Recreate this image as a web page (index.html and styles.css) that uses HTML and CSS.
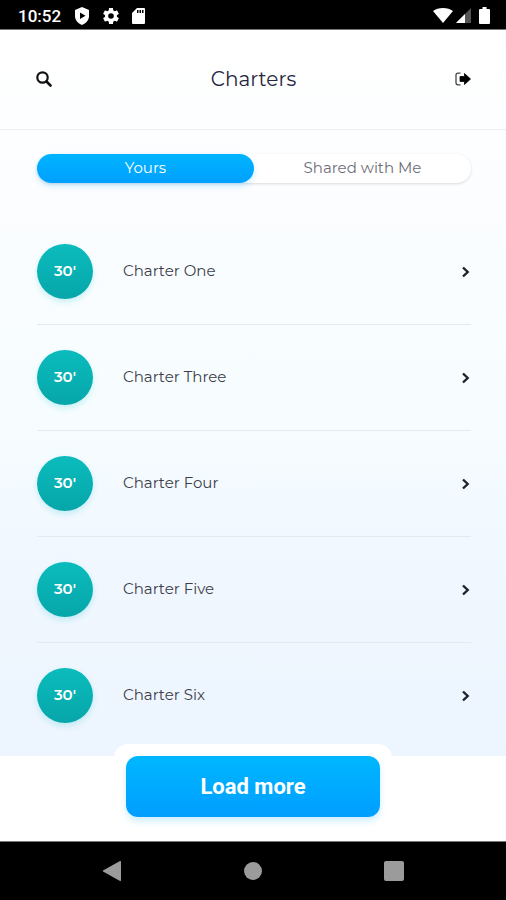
FILE: index.html
```html
<!DOCTYPE html>
<html lang="en">
	<head>
		<meta charset="utf-8">
		<meta name="viewport" content="width=device-width, initial-scale=1">
		<title>Charters</title>
		<link rel="stylesheet" href="styles.css">
	</head>
	<body>
		<div class="statusbar">
			<div class="status-left">
				<span class="clock">10:52</span>
				<svg width="16" height="18" viewBox="0 0 16 18"><path fill="#fff" fill-rule="evenodd" d="M8 0 15 3V9C15 13 12 16.500 8 18 4 16.500 1 13 1 9V3ZM6 5.500V12L11.500 8.800Z"/></svg>
				<svg width="16" height="16" viewBox="2 2 20 20"><path fill="#fff" d="M19.430 12.980c.04-.32.07-.64.07-.98s-.03-.66-.07-.98l2.110-1.650c.19-.15.24-.42.120-.64l-2-3.460c-.12-.22-.39-.3-.61-.22l-2.490 1c-.52-.4-1.080-.73-1.690-.98l-.38-2.650C14.460 2.180 14.250 2 14 2h-4c-.25 0-.46.180-.49.420l-.38 2.650c-.61.250-1.170.590-1.690.980l-2.490-1c-.23-.09-.49 0-.61.220l-2 3.460c-.13.220-.07.490.120.640l2.110 1.650c-.04.320-.07.650-.07.980s.03.660.07.980l-2.110 1.650c-.19.150-.24.420-.12.640l2 3.460c.12.220.39.300.61.220l2.490-1c.52.400 1.080.730 1.690.980l.38 2.650c.03.240.24.420.49.420h4c.25 0 .46-.18.490-.42l.38-2.650c.61-.25 1.170-.59 1.690-.98l2.490 1c.23.090.49 0 .61-.22l2-3.460c.12-.22.070-.49-.12-.64zM12 15.500A3.500 3.500 0 1 1 12 8.500a3.500 3.500 0 0 1 0 7z"/></svg>
				<svg width="14" height="16" viewBox="0 0 14 16"><path fill="#fff" fill-rule="evenodd" d="M5 0H12Q13 0 13 1V15Q13 16 12 16H1Q0 16 0 15V5ZM5 2V5H6.500V2ZM7.500 2V5H9V2ZM10 2V5H11.500V2Z"/></svg>
			</div>
			<div class="status-right">
				<svg width="20" height="15" viewBox="0 0 20 15"><path fill="#fff" d="M10 15 0 3Q4 0 10 0T20 3Z"/></svg>
				<svg width="16" height="15" viewBox="0 0 16 15"><path fill="#555" d="M15 0V15H0Z"/><path fill="#fff" d="M9 6V15H0Z"/></svg>
				<svg class="battery" width="11" height="17" viewBox="0 0 11 17"><path fill="#fff" d="M3.500 0H7.500V2H10Q11 2 11 3V16Q11 17 10 17H1Q0 17 0 16V3Q0 2 1 2H3.500Z"/></svg>
			</div>
		</div>
		<div class="screen">
			<header class="header">
				<button type="button" class="icon-btn" aria-label="Search">
					<svg width="16" height="16" viewBox="0 0 16 16"><circle cx="6.500" cy="6.500" r="5.200" fill="none" stroke="#111" stroke-width="2.200"/><path d="M10.500 10.500 14.500 14.500" stroke="#111" stroke-width="2.600" stroke-linecap="round"/></svg>
				</button>
				<h1>Charters</h1>
				<button type="button" class="icon-btn" aria-label="Log out">
					<svg width="16" height="14" viewBox="0 0 16 14"><path d="M5.500 1.200H3Q1 1.200 1 3.200V10.800Q1 12.800 3 12.800H5.500" fill="none" stroke="#444" stroke-width="1.300"/><path d="M5 4.500H9.500V1.500L15.500 7 9.500 12.500V9.500H5Z" fill="#000" stroke="#000" stroke-linejoin="round" stroke-width=".8"/></svg>
				</button>
			</header>
			<main class="content">
				<div class="tabs" role="tablist">
					<button type="button" class="tab active" role="tab" aria-selected="true">Yours</button>
					<button type="button" class="tab" role="tab" aria-selected="false">Shared with Me</button>
				</div>
				<ul class="charters">
					<li><a class="charter" href="#one">
						<span class="badge">30'</span><span class="name">Charter One</span>
						<svg width="9" height="12" viewBox="0 0 9 12"><path d="M2 1.500 6.700 6 2 10.500"/></svg>
					</a></li>
					<li><a class="charter" href="#three">
						<span class="badge">30'</span><span class="name">Charter Three</span>
						<svg width="9" height="12" viewBox="0 0 9 12"><path d="M2 1.500 6.700 6 2 10.500"/></svg>
					</a></li>
					<li><a class="charter" href="#four">
						<span class="badge">30'</span><span class="name">Charter Four</span>
						<svg width="9" height="12" viewBox="0 0 9 12"><path d="M2 1.500 6.700 6 2 10.500"/></svg>
					</a></li>
					<li><a class="charter" href="#five">
						<span class="badge">30'</span><span class="name">Charter Five</span>
						<svg width="9" height="12" viewBox="0 0 9 12"><path d="M2 1.500 6.700 6 2 10.500"/></svg>
					</a></li>
					<li><a class="charter" href="#six">
						<span class="badge">30'</span><span class="name">Charter Six</span>
						<svg width="9" height="12" viewBox="0 0 9 12"><path d="M2 1.500 6.700 6 2 10.500"/></svg>
					</a></li>
				</ul>
			</main>
		</div>
		<footer class="footer">
			<div class="load-wrap">
				<button type="button" class="load-more">Load more</button>
			</div>
		</footer>
		<nav class="navbar">
			<button type="button" aria-label="Back"><svg width="20" height="22" viewBox="0 0 20 22"><path fill="#9b9b9b" d="M18 1Q19 .5 19 2V20Q19 21.500 18 21L1 11.500Q.5 11 1 10.500Z"/></svg></button>
			<button type="button" aria-label="Home"><svg width="20" height="20" viewBox="0 0 20 20"><circle cx="10" cy="10" r="9" fill="#9b9b9b"/></svg></button>
			<button type="button" aria-label="Recent apps"><svg width="20" height="20" viewBox="0 0 20 20"><rect width="20" height="20" rx="2" fill="#9b9b9b"/></svg></button>
		</nav>
	</body>
</html>
```
FILE: styles.css
```css
*{
	box-sizing: border-box;
}
body{
	margin: 0;
	min-height: 100vh;
	display: flex;
	flex-direction: column;
	background: #fff;
	color: #3c3d49;
	font-family: Montserrat, Inter, sans-serif;
	font-size: 15px;
}
button{
	margin: 0;
	padding: 0;
	border: none;
	background: none;
	font-family: inherit;
	cursor: pointer;
}
svg{
	display: block;
	flex: none;
}

/* status bar */
.statusbar{
	height: 30px;
	padding: 2px 16px 0 18px;
	display: flex;
	justify-content: space-between;
	align-items: center;
	background: #000;
	border-bottom: 1px solid #777;
}
.status-left{
	display: flex;
	align-items: center;
	gap: 13px;
}
.clock{
	color: #fff;
	font-family: Roboto, sans-serif;
	font-size: 17px;
	font-weight: 500;
}
.status-right{
	display: flex;
	align-items: center;
	gap: 3px;
}
.battery{
	margin-left: 4px;
}

/* page */
.screen{
	flex: 1;
	background: linear-gradient(#fff 0%, #fbfdff 25%, #f7fdff 50%, #f0f7ff 75%, #edf5fe 100%);
}
.header{
	height: 100px;
	padding: 0 34px 2px 35px;
	display: flex;
	justify-content: space-between;
	align-items: center;
	border-bottom: 1px solid #eceff2;
}
.header h1{
	margin: 0;
	color: #25253c;
	font-size: 20px;
	line-height: 24px;
	font-weight: 400;
}
.icon-btn{
	width: 17px;
	height: 24px;
	display: flex;
	justify-content: center;
	align-items: center;
}
.content{
	padding: 24px 35px 7px 37px;
}
.tabs{
	display: flex;
	height: 29px;
	border-radius: 15px;
	background: #fff;
	box-shadow: 0 1px 3px rgba(0, 0, 0, .14);
}
.tab{
	flex: 1;
	padding-bottom: 2px;
	border-radius: 15px;
	color: #6d6e78;
	font-size: 15px;
}
.tab.active{
	background: linear-gradient(#00b4ff, #00a0ff);
	color: #fff;
	box-shadow: 0 3px 6px rgba(0, 170, 255, .2);
}
.charters{
	margin: 36px 0 0;
	padding: 0;
	list-style: none;
}
.charters li{
	height: 106px;
	border-bottom: 1px solid #e5eaed;
}
.charters li:last-child{
	border-bottom: none;
}
.charter{
	height: 105px;
	display: flex;
	align-items: center;
	color: inherit;
	text-decoration: none;
}
.charter svg{
	margin-right: 1px;
	fill: none;
	stroke: #20212c;
	stroke-width: 2.4;
}
.badge{
	width: 56px;
	height: 55px;
	margin-right: 30px;
	padding-bottom: 2px;
	display: flex;
	justify-content: center;
	align-items: center;
	border-radius: 50%;
	background: linear-gradient(#0bbcbc, #06a6aa);
	box-shadow: 0 3px 6px rgba(0, 190, 200, .2);
	color: #fff;
	font-size: 15px;
	font-weight: 600;
}
.name{
	flex: 1;
	padding-bottom: 2px;
}

/* load more */
.footer{
	display: flex;
	justify-content: center;
	padding-bottom: 12px;
}
.load-wrap{
	width: 55%;
	margin-top: -12px;
	padding: 12px;
	border-radius: 14px;
	background: #fff;
}
.load-more{
	width: 100%;
	height: 61px;
	display: block;
	border-radius: 12px;
	background: linear-gradient(#00b7ff, #009eff);
	box-shadow: 0 4px 7px rgba(0, 170, 255, .2);
	color: #fff;
	font-family: Roboto, sans-serif;
	font-size: 22px;
	font-weight: 700;
}

/* system navigation */
.navbar{
	height: 59px;
	padding: 0 102px;
	display: flex;
	justify-content: space-between;
	align-items: center;
	background: #000;
	border-top: 1px solid #777;
}
```
